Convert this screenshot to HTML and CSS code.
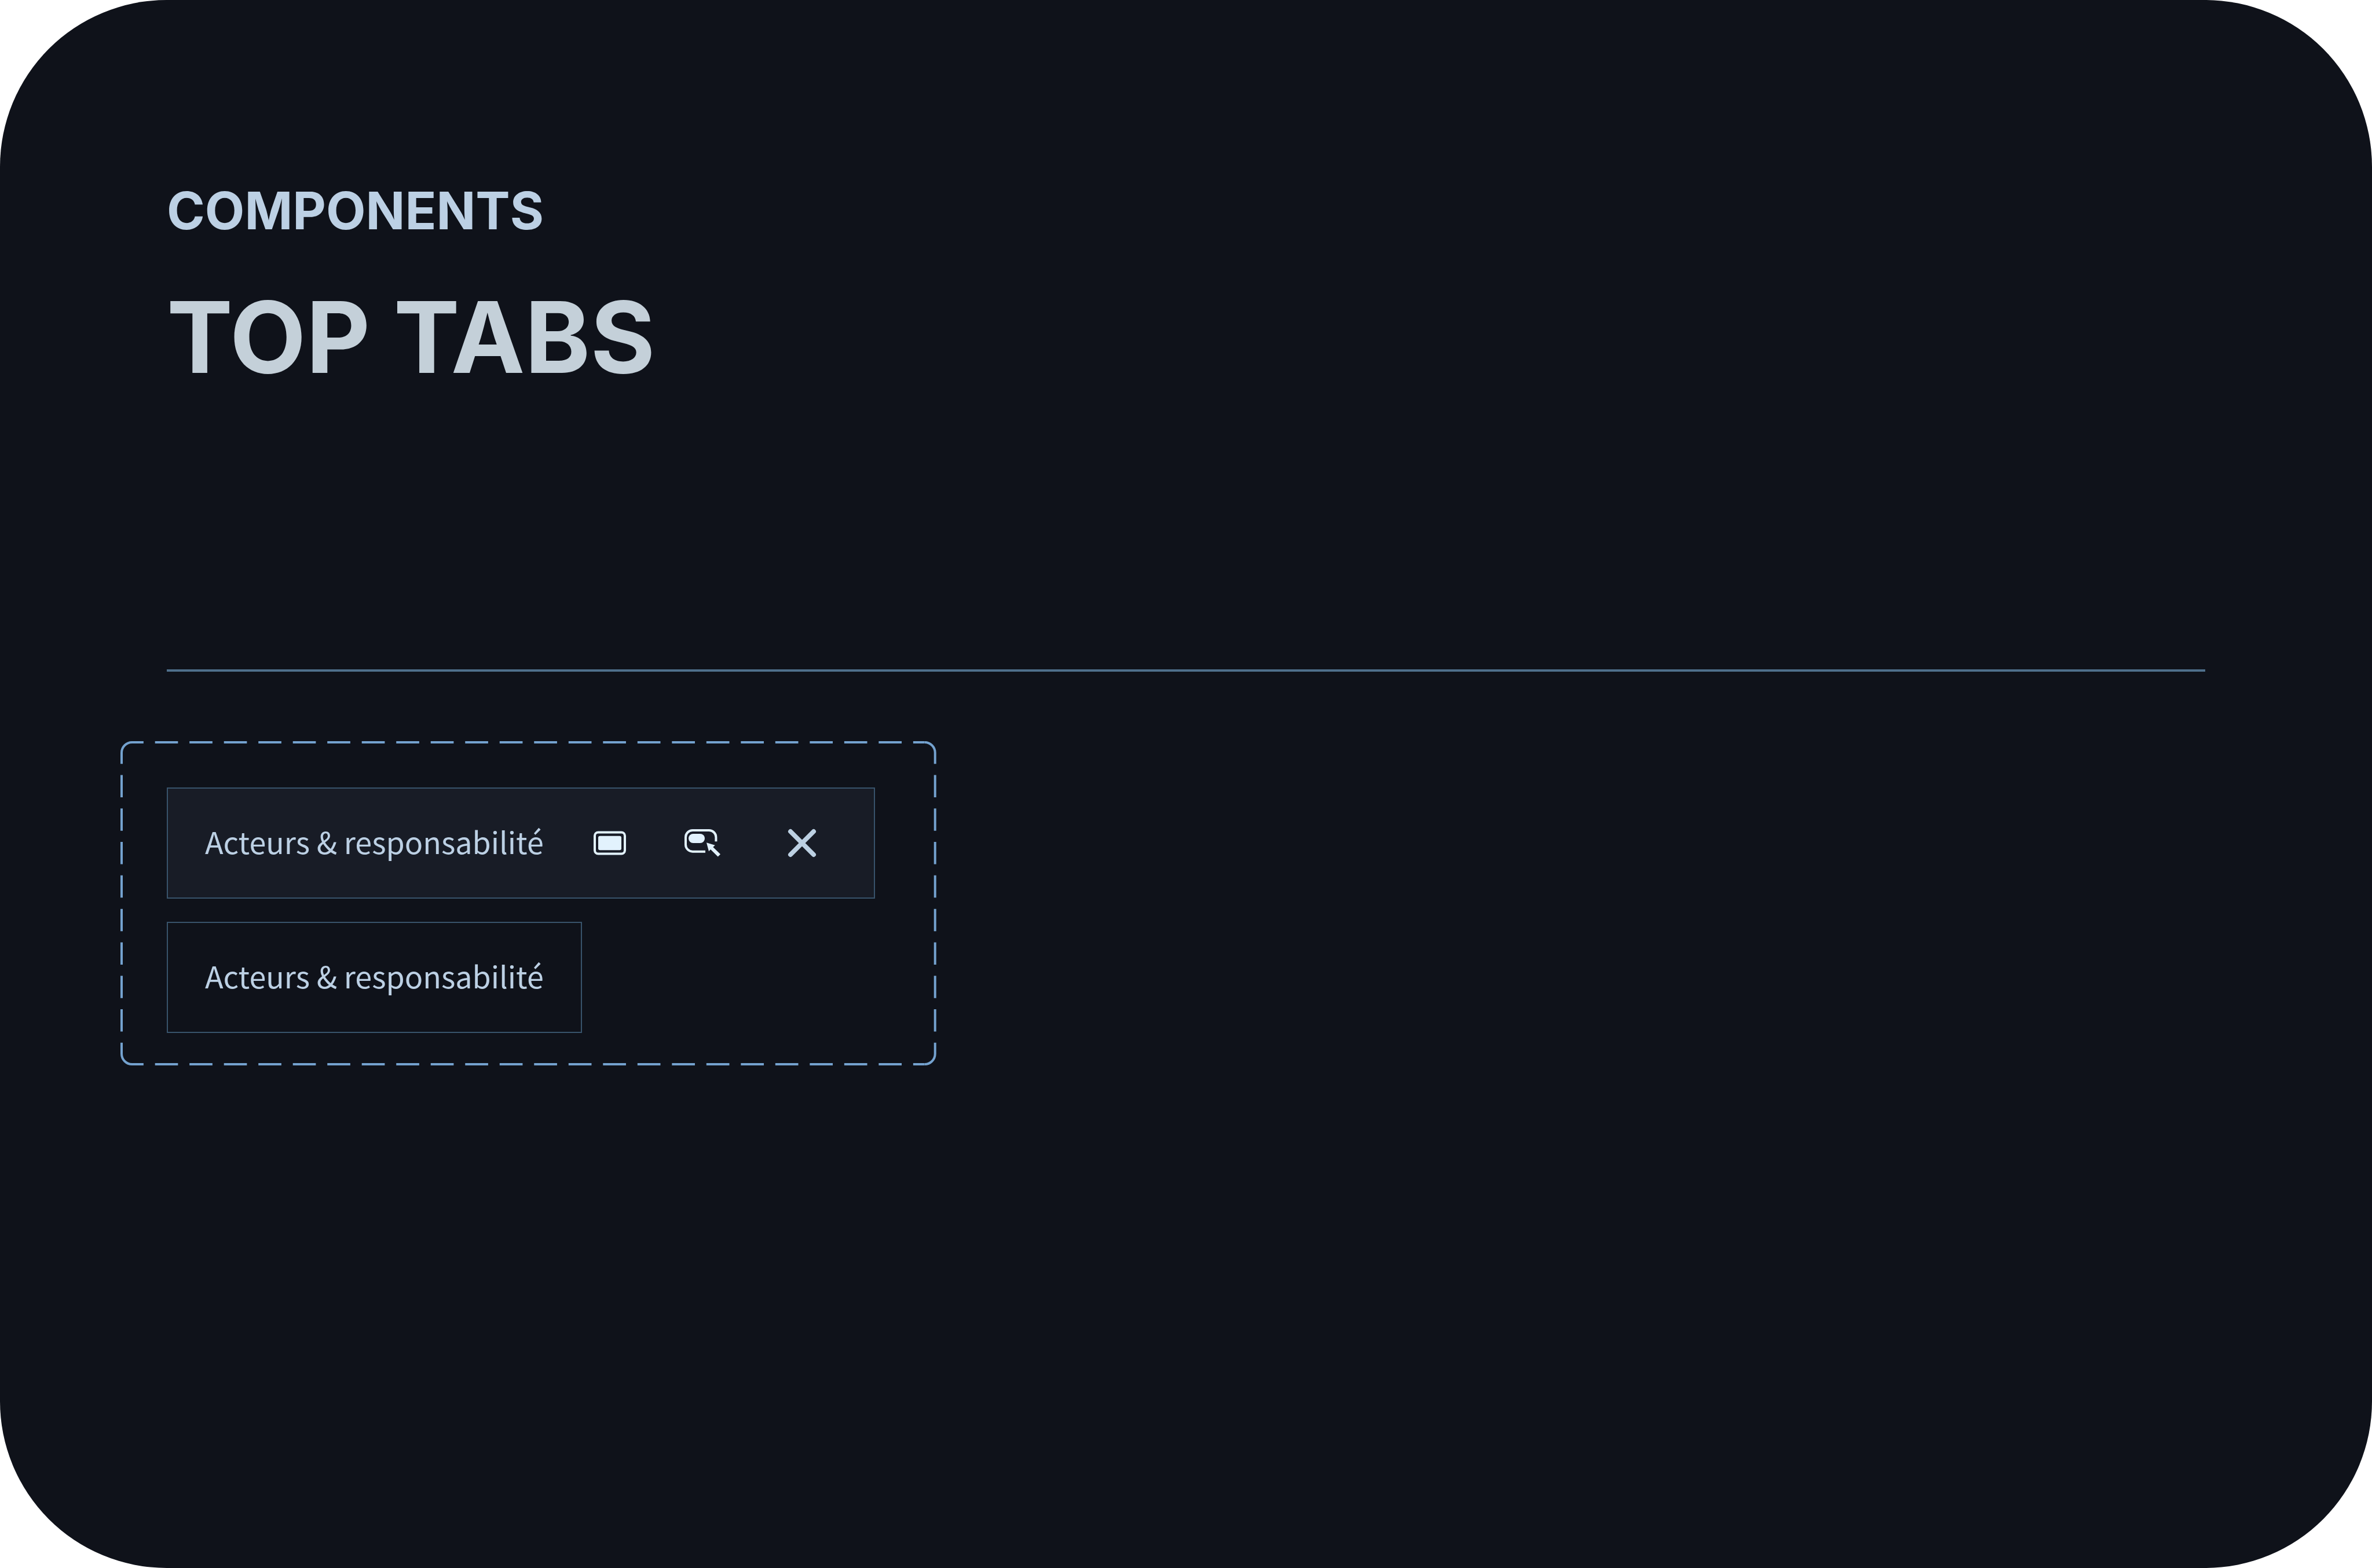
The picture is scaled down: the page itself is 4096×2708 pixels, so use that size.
FILE: index.html
```html
<!DOCTYPE html>
<html lang="en">
<head>
  <meta charset="utf-8">
  <title>Components – Top tabs</title>
  <link rel="stylesheet" href="styles.css">
</head>
<body>
  <main class="board">
    <header class="board-header">
      <p class="eyebrow">COMPONENTS</p>
      <h1 class="title">TOP TABS</h1>
    </header>

    <section class="variants" aria-label="Top tab variants">
      <svg class="outline" viewBox="0 0 1408 560" preserveAspectRatio="none" aria-hidden="true">
        <path d="M2 20A18 18 0 0 1 20 2M1388 2A18 18 0 0 1 1406 20M1406 540A18 18 0 0 1 1388 558M20 558A18 18 0 0 1 2 540"/>
        <path class="dashes" pathLength="69" d="M20 2H1388"/>
        <path class="dashes" pathLength="69" d="M20 558H1388"/>
        <path class="dashes" pathLength="27" d="M2 20V540"/>
        <path class="dashes" pathLength="27" d="M1406 20V540"/>
      </svg>

      <div class="tab tab-active">
        <button class="tab-label" type="button">Acteurs &amp; responsabilité</button>
        <div class="tab-actions">
          <button class="action" type="button" aria-label="Full screen">
            <svg class="icon" viewBox="0 0 64 64" aria-hidden="true">
              <rect class="line" x="6" y="13.5" width="52" height="37" rx="6"/>
              <rect class="fill" x="12" y="19.7" width="40" height="24.6" rx="3"/>
            </svg>
          </button>
          <button class="action" type="button" aria-label="Detach">
            <svg class="icon" viewBox="0 0 64 64" aria-hidden="true">
              <path class="line" d="M37 46.7H15A12 12 0 0 1 3 34.7V22A12 12 0 0 1 15 10H43.4A12 12 0 0 1 55.4 22V29.3"/>
              <rect class="fill" x="8" y="16" width="28" height="16" rx="8"/>
              <path class="fill" d="M39 31.3L53.7 35.7L50.3 39L63 51.3L58.7 55.5L46 43L43 46.3Z"/>
            </svg>
          </button>
          <button class="action action-close" type="button" aria-label="Close">
            <svg class="icon" viewBox="0 0 64 64" aria-hidden="true">
              <path d="M12 12L52 52M52 12L12 52"/>
            </svg>
          </button>
        </div>
      </div>

      <div class="tab">
        <button class="tab-label" type="button">Acteurs &amp; responsabilité</button>
      </div>
    </section>
  </main>
</body>
</html>
```

FILE: styles.css
```css
* {
  box-sizing: border-box;
}

body {
  margin: 0;
  background: #ffffff;
}

button {
  margin: 0;
  border: 0;
  background: none;
  color: inherit;
  font: inherit;
  cursor: pointer;
}

.board {
  min-height: 100vh;
  padding: 312px 208px;
  border-radius: 288px;
  background: #0f121a;
  font-family: Inter, "Liberation Sans", sans-serif;
}

.board-header {
  display: flex;
  flex-direction: column;
  gap: 66px;
  margin: 0 80px 120px;
  padding-bottom: 474px;
  border-bottom: 4px solid #4f708c;
}

.eyebrow {
  margin: 0;
  color: #bcd0e4;
  font-size: 89px;
  font-weight: 700;
  line-height: 104px;
}

.title {
  margin: 0;
  color: #c4d0d9;
  font-size: 171px;
  font-weight: 700;
  line-height: 200px;
}

.variants {
  position: relative;
  display: flex;
  flex-direction: column;
  align-items: flex-start;
  gap: 40px;
  width: fit-content;
  padding: 80px 106px 56px 80px;
}

.outline {
  position: absolute;
  inset: 0;
  width: 100%;
  height: 100%;
  fill: none;
  stroke: #74a2cf;
  stroke-width: 4px;
  pointer-events: none;
}

.dashes {
  stroke-dasharray: 2 1;
  stroke-dashoffset: 1;
}

.tab {
  display: flex;
  align-items: center;
  height: 192px;
  border: 2px solid #38536b;
  color: #bcd0e4;
  font-family: "Noto Sans CJK JP", "Noto Sans", sans-serif;
  font-size: 52px;
  line-height: 80px;
}

.tab-active {
  padding-right: 32px;
  background: #181c26;
}

.tab-label {
  height: 100%;
  padding: 0 64px 6px;
  white-space: nowrap;
}

.tab-active .tab-label {
  padding-right: 34px;
}

.tab-actions {
  display: flex;
  height: 100%;
}

.action {
  display: grid;
  place-items: center;
  width: 160px;
  padding: 0;
}

.action-close {
  width: 184px;
}

.icon {
  width: 64px;
  height: 64px;
  fill: none;
  stroke: #bcd0e2;
  stroke-width: 8px;
  stroke-linecap: round;
}

.line {
  stroke: #e2f2fd;
  stroke-width: 4px;
  stroke-linecap: butt;
}

.fill {
  fill: #e2f2fd;
  stroke: none;
}
```
